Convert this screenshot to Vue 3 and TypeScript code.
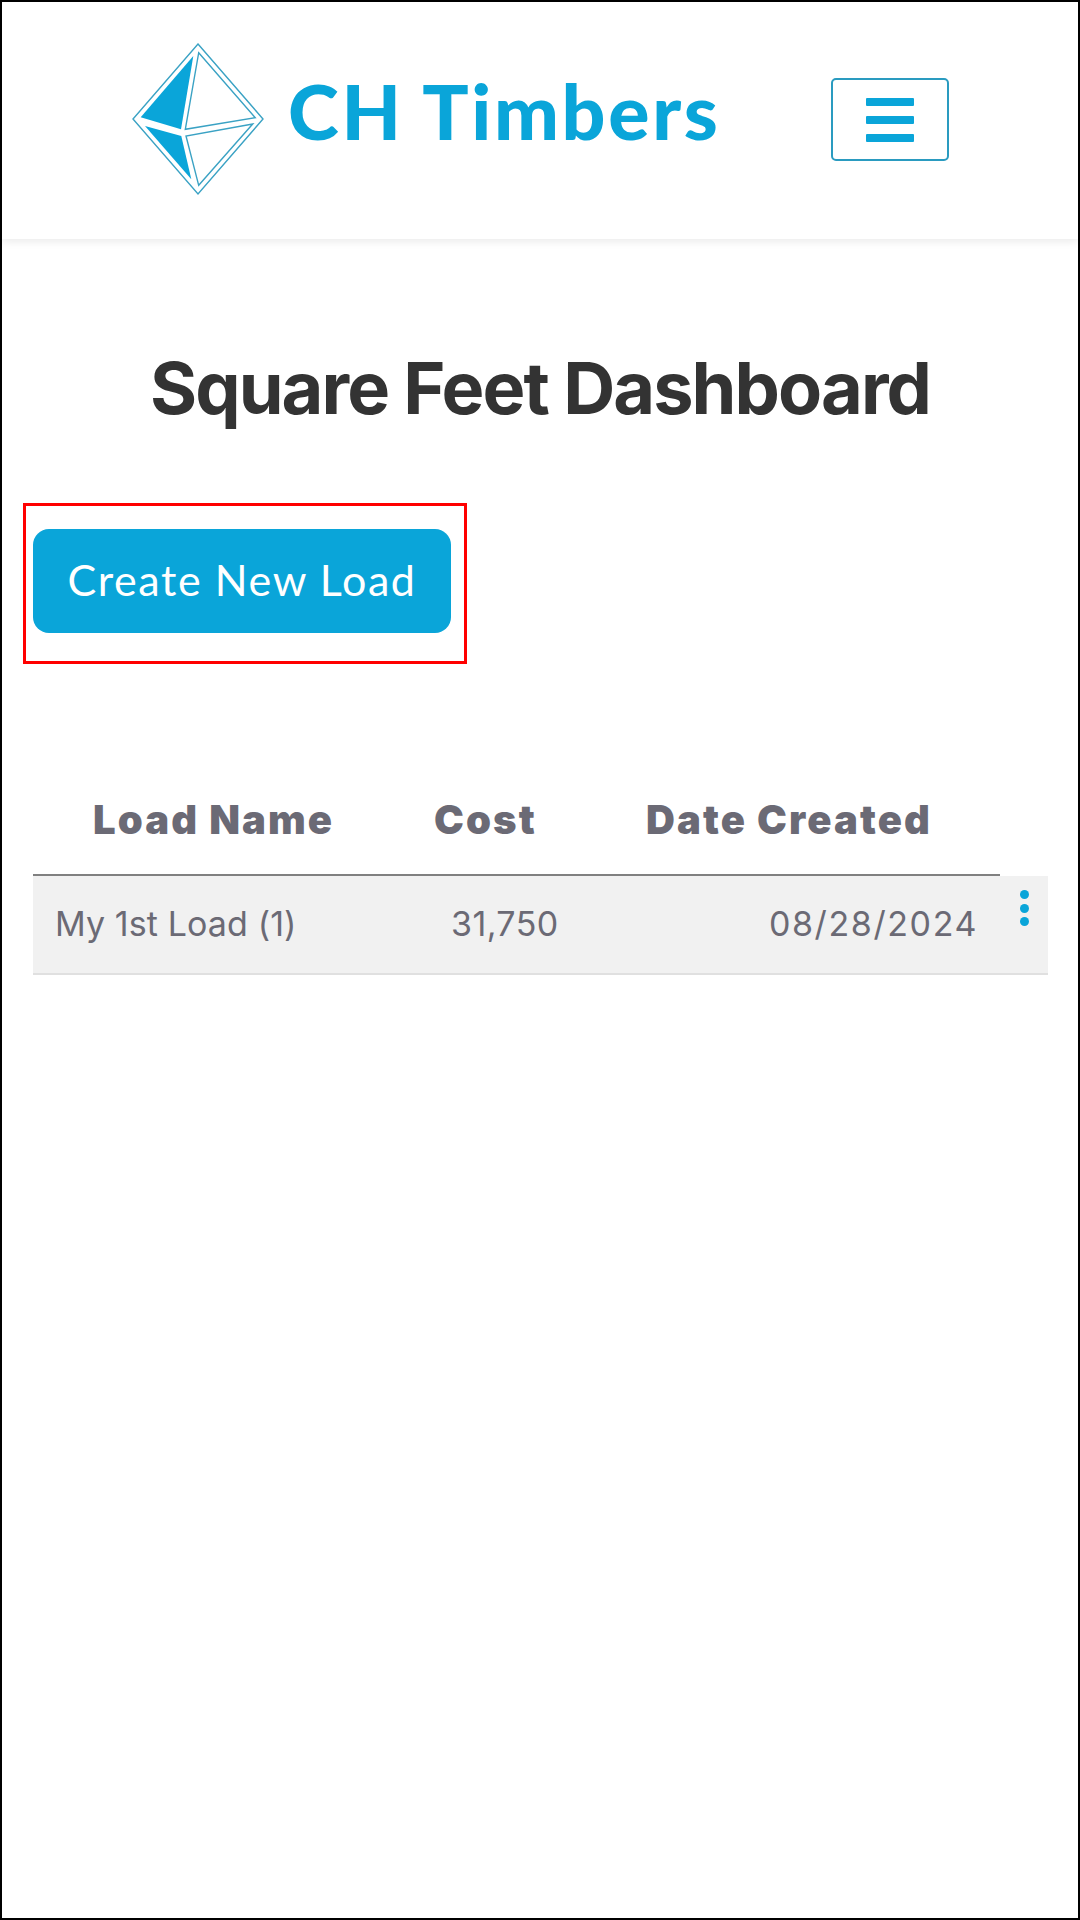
<script setup lang="ts">
const columns: string[] = ['Load Name', 'Cost', 'Date Created']
const row = { name: 'My 1st Load (1)', cost: '31,750', date: '08/28/2024' }
</script>

<template>
  <div class="page">
    <header class="header">
      <svg class="logo" viewBox="0 0 132 154" aria-hidden="true">
        <polygon class="outline" points="66,1 131,76 66,151 1,76" />
        <polygon class="fill" points="61.3,13 8.7,74.3 49,86.3" />
        <polygon class="fill" points="13,83 49.3,93 59.3,136.3" />
        <polygon class="outline" points="66.7,9.7 123.3,74.7 53.3,86.3" />
        <polygon class="outline" points="120.7,81 54,93 66.7,142.3" />
      </svg>
      <span class="brand">CH Timbers</span>
      <button class="menu" type="button" aria-label="Menu">
        <span></span><span></span><span></span>
      </button>
    </header>

    <main class="content">
      <h1 class="title">Square Feet Dashboard</h1>
      <div class="highlight">
        <button class="create" type="button">Create New Load</button>
      </div>

      <section class="table">
        <div class="thead">
          <div v-for="c in columns" :key="c" class="th">{{ c }}</div>
        </div>
        <div class="tbody">
          <div class="td name">{{ row.name }}</div>
          <div class="td cost">{{ row.cost }}</div>
          <div class="td date">{{ row.date }}</div>
          <div class="dots"><i></i><i></i><i></i></div>
        </div>
      </section>
    </main>
  </div>
</template>

<style>
html, body { margin: 0; background: #fff; }
</style>

<style scoped>
.page {
  width: 1080px;
  height: 1920px;
  box-sizing: border-box;
  border: 2px solid #000;
  background: #fff;
  overflow: hidden;
}
.header {
  height: 237px;
  display: flex;
  align-items: flex-start;
  box-shadow: 0 3px 8px rgba(0, 0, 0, 0.08);
  padding: 41px 0 0 130px;
  box-sizing: border-box;
}
.logo { width: 132px; height: 154px; flex: none; }
.outline { fill: none; stroke: #3aa2c4; stroke-width: 1.4; }
.fill { fill: #0aa5d9; }
.brand {
  font-family: "Lato", sans-serif;
  font-weight: 900;
  font-size: 77px;
  line-height: 92px;
  letter-spacing: 2.7px;
  color: #0aa5d9;
  margin: 21px 0 0 24px;
  width: 543px;
  flex: none;
  white-space: nowrap;
}
.menu {
  width: 118px;
  height: 83px;
  margin: 35px 0 0 0;
  flex: none;
  box-sizing: border-box;
  border: 2px solid #2a9bc0;
  border-radius: 5px;
  background: #fff;
  padding: 0;
  display: flex;
  flex-direction: column;
  align-items: center;
  justify-content: center;
  gap: 10px;
}
.menu span { display: block; width: 48px; height: 8px; background: #0aa5d9; border-radius: 1px; }
.content { padding: 0 31px; }
.title {
  margin: 104px 0 0;
  font-family: "Inter", sans-serif;
  font-weight: 700;
  font-size: 72px;
  line-height: 90px;
  letter-spacing: -1.9px;
  color: #333;
  text-align: center;
}
.highlight {
  margin: 70px 0 0 -10px;
  width: 444px;
  height: 161px;
  box-sizing: border-box;
  border: 3px solid #f00;
  padding: 23px 0 0 7px;
}
.create {
  display: block;
  width: 418px;
  height: 104px;
  border: 0;
  border-radius: 16px;
  background: #0aa5d9;
  color: #fff;
  font-family: "Lato", sans-serif;
  font-size: 43px;
  letter-spacing: 1.6px;
  padding: 0 0 4px;
  text-align: center;
}
.table { margin-top: 124px; width: 1015px; }
.thead {
  width: 967px;
  height: 86px;
  display: grid;
  grid-template-columns: 342px 213px 412px;
  border-bottom: 2px solid #808080;
}
.th {
  font-family: "Inter", sans-serif;
  font-weight: 900;
  font-size: 40px;
  line-height: 64px;
  letter-spacing: 2.1px;
  color: #6b6a75;
}
.th:nth-child(1) { padding-left: 60px; }
.th:nth-child(2) { padding-left: 59px; }
.th:nth-child(3) { padding-left: 58px; }
.tbody {
  height: 97px;
  background: #f1f1f1;
  border-bottom: 2px solid #e0e0e0;
  display: grid;
  grid-template-columns: 342px 213px 412px 48px;
  font-family: "Inter", sans-serif;
  font-size: 34px;
  color: #6b6a75;
}
.td { line-height: 96px; }
.name { padding-left: 22px; letter-spacing: 0.1px; }
.cost { padding-left: 76px; letter-spacing: 0.4px; }
.date { text-align: right; padding-right: 22px; letter-spacing: 1.6px; }
.dots { display: flex; flex-direction: column; align-items: center; gap: 4.5px; padding-top: 14px; }
.dots i { display: block; width: 9px; height: 9px; border-radius: 50%; background: #0aa5d9; }
</style>
